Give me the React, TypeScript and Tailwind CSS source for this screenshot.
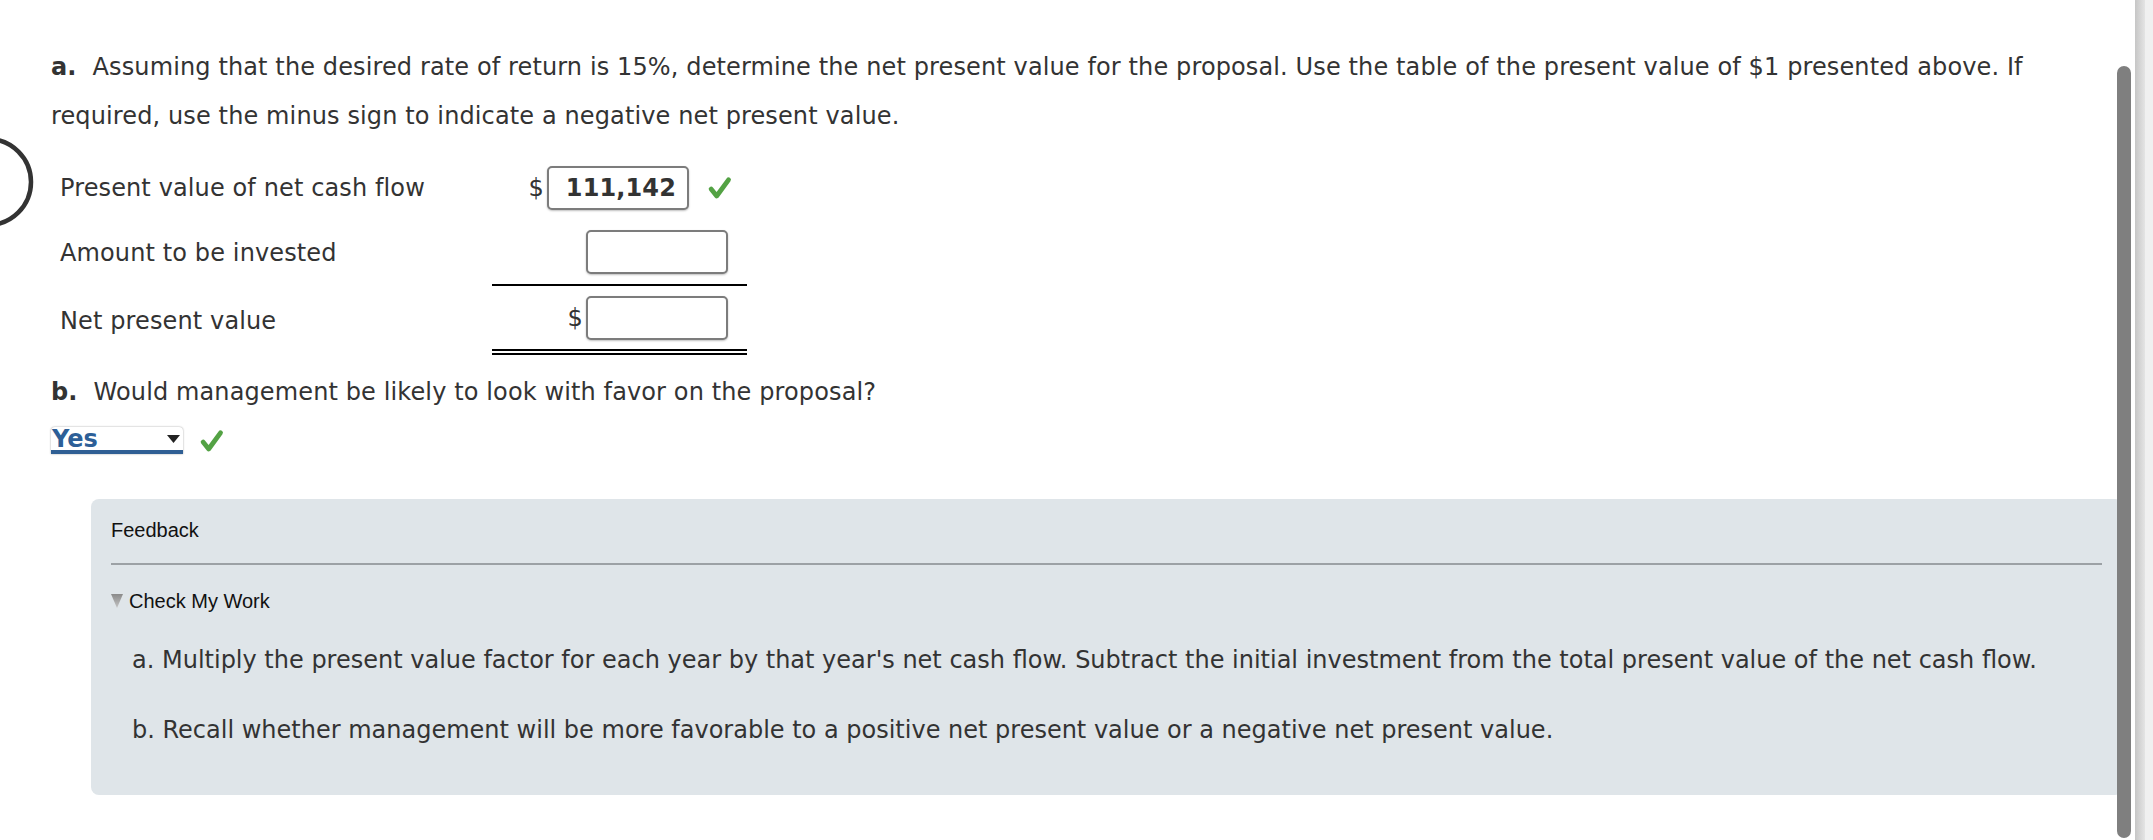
const Check = ({className}: {className?: string}) => (
  <svg viewBox="0 0 24 24" className={className} fill="none">
    <path
      d="M3.6 13 L9.2 20 L21 3.8"
      stroke="#53a244"
      strokeWidth="4.8"
      strokeLinecap="round"
      strokeLinejoin="round"
    />
  </svg>
)

const InputBox = ({value}: {value?: string}) => (
  <div className="w-[142px] h-[44px] rounded-[5px] border-2 border-[#7c7c7c] bg-white shadow-[0_1px_2px_rgba(0,0,0,0.25)] flex items-center justify-end pr-[11px] font-bold text-[24px] text-[#333]">
    {value}
  </div>
)

export default function App() {
  return (
    <div className="relative flex h-[840px] w-[2153px] overflow-hidden bg-white font-['DejaVu_Sans','Verdana',sans-serif] text-[#333]">
      <main className="flex-1 pl-[51px] pt-[43px] pr-[12px]">
        <p className="text-[24px] leading-[49px] tracking-[0.12px] pr-[8px]">
          <b className="mr-[16px]">a.</b>Assuming that the desired rate of return is 15%, determine the net present value for the proposal. Use the table of the present value of $1 presented above. If required, use the minus sign to indicate a negative net present value.
        </p>

        <div className="mt-[15px] text-[24px] tracking-[0.12px]">
          <div className="flex h-[64px] items-center">
            <div className="w-[441px] pl-[9px]">Present value of net cash flow</div>
            <div className="w-[255px] h-full flex items-center justify-end pr-[15px]">
              <span className="mr-[3px]">$</span>
              <InputBox value="111,142" />
              <Check className="ml-[18px] w-[25px] h-[24px]" />
            </div>
          </div>
          <div className="flex h-[66px] items-stretch">
            <div className="w-[441px] pl-[9px] flex items-center">Amount to be invested</div>
            <div className="w-[255px] flex items-center justify-end pr-[19px] border-b-2 border-black">
              <InputBox />
            </div>
          </div>
          <div className="flex h-[69px] items-stretch">
            <div className="w-[441px] pl-[9px] flex items-center">Net present value</div>
            <div className="w-[255px] flex items-center justify-end pr-[19px] border-b-[6px] border-double border-black">
              <span className="mr-[3px]">$</span>
              <InputBox />
            </div>
          </div>
        </div>

        <p className="mt-[13px] text-[24px] leading-[49px] tracking-[0.12px]">
          <b className="mr-[16px]">b.</b>Would management be likely to look with favor on the proposal?
        </p>
        <div className="mt-[10px] flex items-center gap-[16px]">
          <div className="w-[132px] h-[27px] bg-white rounded-t-[4px] shadow-[0_0_2px_rgba(0,0,0,0.4)] border-b-4 border-[#2f5f94] flex items-center justify-between pl-[1px] pr-[3px]">
            <span className="font-bold text-[24px] leading-none text-[#2d5f97]">Yes</span>
            <svg width="13" height="8" viewBox="0 0 13 8">
              <polygon points="0,0 13,0 6.5,8" fill="#222" />
            </svg>
          </div>
          <Check className="w-[25px] h-[24px]" />
        </div>

        <section className="mt-[45px] ml-[40px] rounded-[8px] bg-[#dfe5e9] pl-[20px] pr-[21px] pt-[19px] pb-[49px]">
          <div className="font-['Liberation_Sans',Arial,sans-serif] text-[20px] leading-[24px] text-[#111]">Feedback</div>
          <div className="mt-[21px] h-[2px] bg-[#9ca1a5]" />
          <div className="mt-[24px] flex items-center gap-[6px] font-['Liberation_Sans',Arial,sans-serif] text-[20px] leading-[24px] text-[#111]">
            <svg width="12" height="14" viewBox="0 0 12 14">
              <defs>
                <linearGradient id="tri" x1="0" y1="0" x2="0" y2="1">
                  <stop offset="0" stopColor="#8a8a8a" />
                  <stop offset="1" stopColor="#c4c4c4" />
                </linearGradient>
              </defs>
              <polygon points="0,0 12,0 6,14" fill="url(#tri)" />
            </svg>
            <span>Check My Work</span>
          </div>
          <div className="pl-[21px] text-[24px] leading-[32px] text-[#333]">
            <p className="mt-[31px]">a. Multiply the present value factor for each year by that year's net cash flow. Subtract the initial investment from the total present value of the net cash flow.</p>
            <p className="mt-[38px]">b. Recall whether management will be more favorable to a positive net present value or a negative net present value.</p>
          </div>
        </section>
      </main>

      <div className="flex w-[18px]">
        <div className="w-[10px] bg-gradient-to-r from-[#c6c6c6] to-[#e4e4e4]" />
        <div className="flex-1 bg-[#f0f0f0]" />
      </div>

      <div className="absolute left-[2117px] top-[66px] h-[772px] w-[14px] rounded-full bg-[#7f7f7f]" />

      <svg className="absolute left-0 top-[134px]" width="40" height="100" viewBox="0 0 40 100">
        <circle cx="-12" cy="48" r="43" fill="none" stroke="#333" strokeWidth="4.5" />
      </svg>
    </div>
  )
}
